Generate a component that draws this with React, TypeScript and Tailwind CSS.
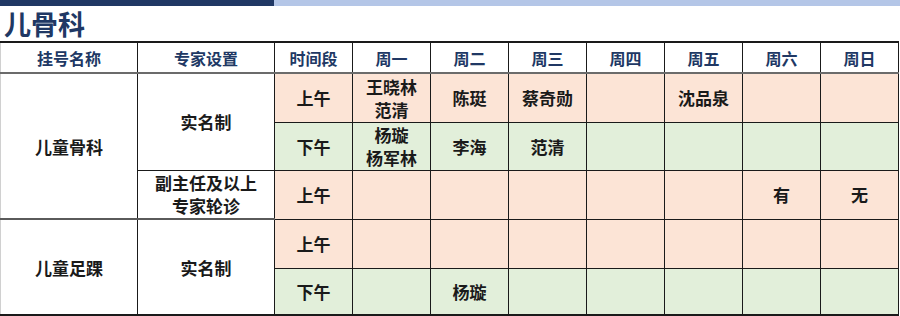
import React from "react";

type Period = "上午" | "下午";

interface Slot {
  period: Period;
  cells: string[][];
}

const DAYS = ["周一", "周二", "周三", "周四", "周五", "周六", "周日"];
const HEADERS = ["挂号名称", "专家设置", "时间段", ...DAYS];

const PINK = "bg-[#fce4d6]";
const GREEN = "bg-[#e2efda]";

const font = { fontFamily: '"Noto Sans CJK SC", "Noto Sans", sans-serif' };

function periodBg(p: Period) {
  return p === "上午" ? PINK : GREEN;
}

const cellBase = "border border-[#1a1a1a] text-center align-middle font-bold text-[17px] leading-[23px] text-[#1a1a1a] p-0";

function SlotCells({ slot }: { slot: Slot }) {
  const bg = periodBg(slot.period);
  return (
    <>
      <td className={`${cellBase} ${bg}`}>{slot.period}</td>
      {slot.cells.map((names, i) => (
        <td key={i} className={`${cellBase} ${bg}`}>
          {names.map((n) => (
            <div key={n}>{n}</div>
          ))}
        </td>
      ))}
    </>
  );
}

const e: string[] = [];

const bone: Slot[] = [
  { period: "上午", cells: [["王晓林", "范清"], ["陈珽"], ["蔡奇勋"], e, ["沈品泉"], e, e] },
  { period: "下午", cells: [["杨璇", "杨军林"], ["李海"], ["范清"], e, e, e, e] },
  { period: "上午", cells: [e, e, e, e, e, ["有"], ["无"]] },
];

const ankle: Slot[] = [
  { period: "上午", cells: [e, e, e, e, e, e, e] },
  { period: "下午", cells: [e, ["杨璇"], e, e, e, e, e] },
];

export default function App() {
  return (
    <div className="w-[900px] h-[316px] bg-white overflow-hidden" style={font}>
      <div className="flex h-[6px]">
        <div className="w-[274px] bg-[#203864]" />
        <div className="flex-1 bg-[#b4c6e7]" />
      </div>
      <div className="h-[35px] pl-[4px] flex items-center">
        <h1 className="text-[27px] font-bold leading-none text-[#203864]">儿骨科</h1>
      </div>
      <table className="border-collapse table-fixed w-[899px] border-b-2 border-b-[#1a1a1a]">
        <colgroup>
          <col className="w-[137px]" />
          <col className="w-[137px]" />
          {HEADERS.slice(2).map((h) => (
            <col key={h} className="w-[78px]" />
          ))}
        </colgroup>
        <thead>
          <tr className="h-[31px]">
            {HEADERS.map((h, i) => (
              <th
                key={h}
                className={`border border-[#1a1a1a] border-t-2 border-b-2 border-b-[#6b6b6b] bg-white text-center font-bold text-[16px] text-[#203864] p-0 ${
                  i === 0 ? "border-l-[#d0d0d0]" : ""
                }`}
              >
                {h}
              </th>
            ))}
          </tr>
        </thead>
        <tbody>
          <tr className="h-[49px]">
            <td rowSpan={3} className={`${cellBase} bg-white border-l-[#d0d0d0] border-b-2 border-b-[#5a5a5a]`}>
              儿童骨科
            </td>
            <td rowSpan={2} className={`${cellBase} bg-white`}>
              实名制
            </td>
            <SlotCells slot={bone[0]} />
          </tr>
          <tr className="h-[48px]">
            <SlotCells slot={bone[1]} />
          </tr>
          <tr className="h-[49px]">
            <td className={`${cellBase} bg-white border-b-2 border-b-[#5a5a5a]`}>
              <div>副主任及以上</div>
              <div>专家轮诊</div>
            </td>
            <SlotCells slot={bone[2]} />
          </tr>
          <tr className="h-[49px]">
            <td rowSpan={2} className={`${cellBase} bg-white border-l-[#d0d0d0]`}>
              儿童足踝
            </td>
            <td rowSpan={2} className={`${cellBase} bg-white`}>
              实名制
            </td>
            <SlotCells slot={ankle[0]} />
          </tr>
          <tr className="h-[47px]">
            <SlotCells slot={ankle[1]} />
          </tr>
        </tbody>
      </table>
    </div>
  );
}
